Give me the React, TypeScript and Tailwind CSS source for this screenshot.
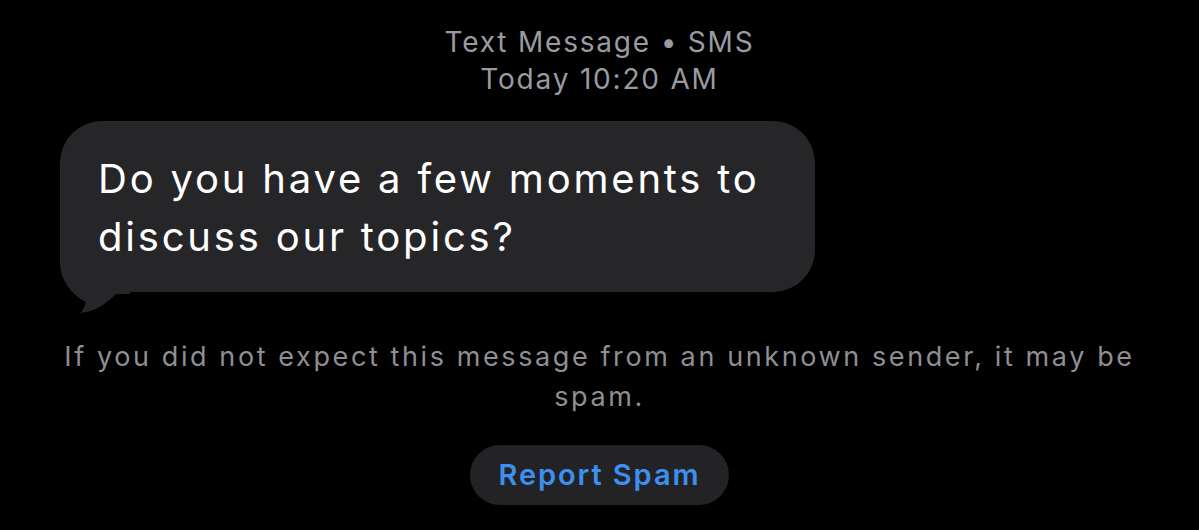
const App = () => {
    return (
        <div className="bg-black w-[1199px] h-[530px] overflow-hidden flex flex-col items-center font-['Inter','Liberation_Sans',sans-serif]">
            <div className="mt-[24px] flex flex-col items-center text-[#9a9aa0] text-[28px] leading-[37px] tracking-[1.8px]">
                <span>Text Message • SMS</span>
                <span>Today 10:20 AM</span>
            </div>
            <div className="self-start ml-[60px] mt-[23px] relative">
                <div className="bg-[#262629] rounded-[42px] w-[755px] h-[171px] pl-[38px] pt-[29px] text-white text-[40px] leading-[58px] tracking-[2.8px] relative z-10">
                    Do you have a few moments to<br />discuss our topics?
                </div>
                <svg className="absolute left-0 top-[121px]" width="70" height="72" viewBox="0 0 70 72">
                    <path d="M0 0 L0 20 C0 40 14 54 26 60 C24 66 22 70 20 71 C34 70 46 62 56 52 L70 52 L70 0 Z" fill="#262629" />
                </svg>
            </div>
            <div className="mt-[45px] w-[1110px] text-[#8e8e93] text-[27px] leading-[40px] tracking-[2.6px] text-center">
                If you did not expect this message from an unknown sender, it may be spam.
            </div>
            <button className="mt-[28px] bg-[#232325] rounded-full w-[259px] h-[60px] flex items-center justify-center text-[#3d8ff2] text-[29px] font-semibold tracking-[1.9px]">
                Report Spam
            </button>
        </div>
    )
}

export default App
